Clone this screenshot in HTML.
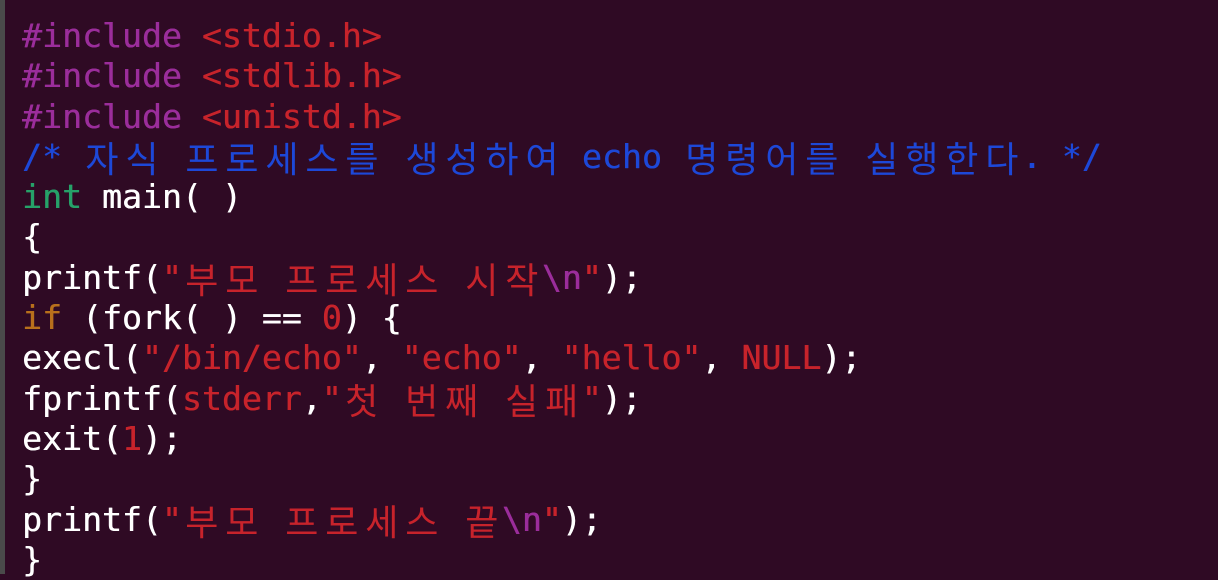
<!DOCTYPE html>
<html><head><meta charset="utf-8"><style>
html,body{margin:0;padding:0;width:1218px;height:574px;overflow:hidden;background:#2f0a24;}
.strip{position:absolute;left:0;top:0;width:5px;height:574px;background:#4a4a4a;}
pre{position:absolute;left:22px;top:16px;margin:0;font-family:"DejaVu Sans Mono","Liberation Mono","NanumGothic",monospace;font-size:33.2px;line-height:40.3px;color:#ffffff;white-space:pre;text-shadow:0.4px 0 0 currentColor;}
.k{display:inline-block;width:40px;text-align:center;font-family:"Noto Sans CJK KR","NanumGothic",sans-serif;font-size:36px;line-height:40px;vertical-align:top;font-weight:400;text-shadow:none}
.p{color:#9b2d9b}.r{color:#c7232b}.b{color:#1d48d8}.g{color:#26a269}.o{color:#b8701c}
</style></head><body><div class="strip"></div>
<pre><span class="p">#include </span><span class="r">&lt;stdio.h&gt;</span>
<span class="p">#include </span><span class="r">&lt;stdlib.h&gt;</span>
<span class="p">#include </span><span class="r">&lt;unistd.h&gt;</span>
<span class="b">/* <span class="k">자</span><span class="k">식</span> <span class="k">프</span><span class="k">로</span><span class="k">세</span><span class="k">스</span><span class="k">를</span> <span class="k">생</span><span class="k">성</span><span class="k">하</span><span class="k">여</span> echo <span class="k">명</span><span class="k">령</span><span class="k">어</span><span class="k">를</span> <span class="k">실</span><span class="k">행</span><span class="k">한</span><span class="k">다</span>. */</span>
<span class="g">int</span> main( )
{
printf(<span class="r">"<span class="k">부</span><span class="k">모</span> <span class="k">프</span><span class="k">로</span><span class="k">세</span><span class="k">스</span> <span class="k">시</span><span class="k">작</span></span><span class="p">\n</span><span class="r">"</span>);
<span class="o">if</span> (fork( ) == <span class="r">0</span>) {
execl(<span class="r">"/bin/echo"</span>, <span class="r">"echo"</span>, <span class="r">"hello"</span>, <span class="r">NULL</span>);
fprintf(<span class="r">stderr</span>,<span class="r">"<span class="k">첫</span> <span class="k">번</span><span class="k">째</span> <span class="k">실</span><span class="k">패</span>"</span>);
exit(<span class="r">1</span>);
}
printf(<span class="r">"<span class="k">부</span><span class="k">모</span> <span class="k">프</span><span class="k">로</span><span class="k">세</span><span class="k">스</span> <span class="k">끝</span></span><span class="p">\n</span><span class="r">"</span>);
}</pre>
</body></html>
